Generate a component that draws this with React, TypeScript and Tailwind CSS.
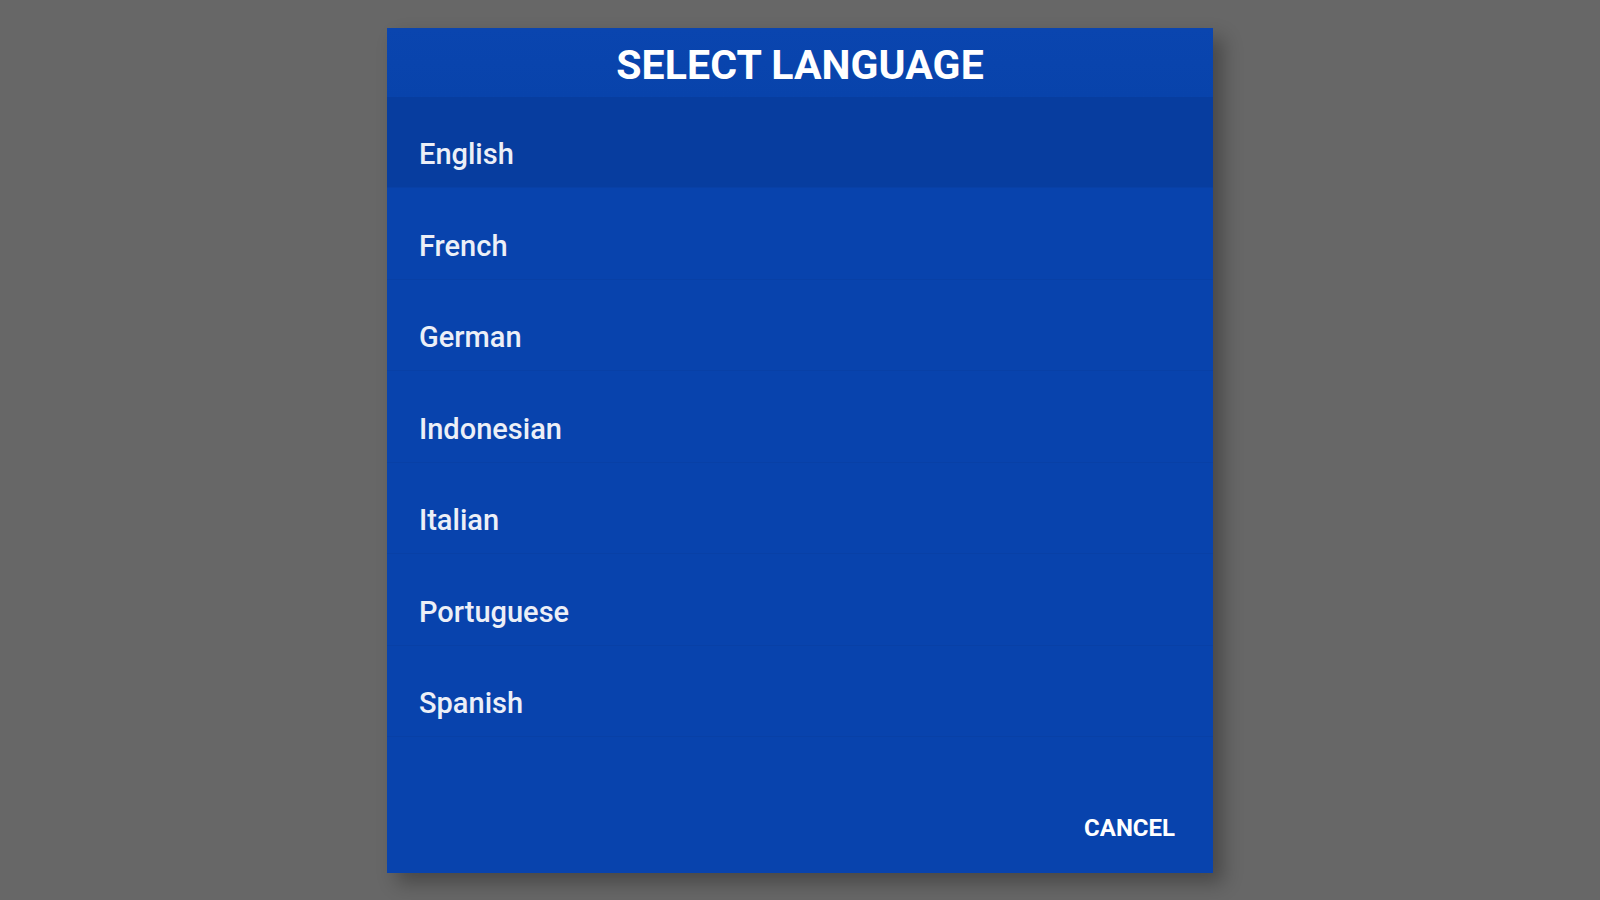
import React from "react";

const languages = ["English", "French", "German", "Indonesian", "Italian", "Portuguese", "Spanish"];

export default function App() {
  return (
    <div className="h-screen w-full bg-[#676767] flex items-center justify-center font-['Roboto',sans-serif]">
      {/* Dialog */}
      <div className="w-[826px] h-[845px] bg-[#0843ad] flex flex-col shadow-[10px_10px_18px_rgba(0,0,0,0.3)]">
        <div className="h-[69px] flex items-center justify-center bg-gradient-to-b from-[#0a45af] to-[#0843ab]">
          <h1 className="text-[41px] font-bold text-white tracking-[0.1px] leading-none pt-[7px]">SELECT LANGUAGE</h1>
        </div>

        <ul className="flex flex-col">
          {languages.map((lang, i) => (
            <li
              key={lang}
              className={`h-[91.5px] flex items-center pl-[32px] pt-[26px] border-b border-[#0840a6] ${
                i === 0 ? "bg-[#073d9f]" : ""
              }`}
            >
              <span className="text-[29px] font-medium text-[#eceff7] leading-none">{lang}</span>
            </li>
          ))}
        </ul>

        <div className="flex-1 flex items-end justify-end pr-[38px] pb-[33px]">
          <button className="text-[24px] font-bold text-white leading-none">CANCEL</button>
        </div>
      </div>
    </div>
  );
}
